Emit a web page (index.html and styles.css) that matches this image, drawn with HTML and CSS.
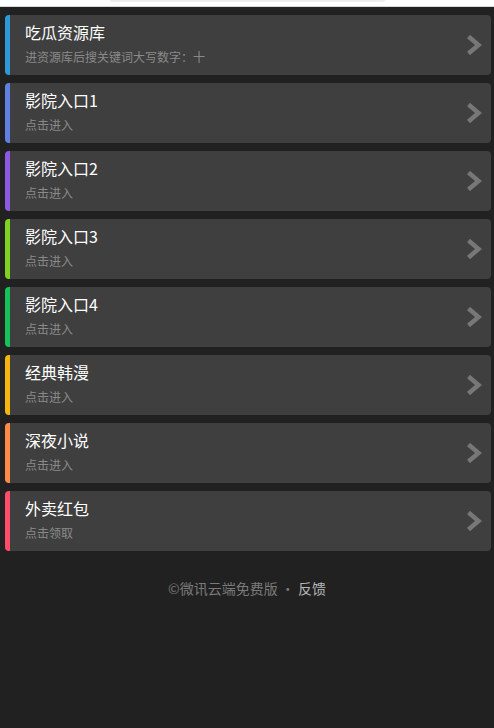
FILE: index.html
```html
<!DOCTYPE html>
<html lang="zh">
<head>
<meta charset="utf-8">
<link rel="stylesheet" href="styles.css">
</head>
<body>
<div class="topbar"><div class="topbar-pill"></div></div>
<div class="list">
  <a class="card c1"><div class="txt"><div class="title">吃瓜资源库</div><div class="sub">进资源库后搜关键词大写数字：十</div></div><svg class="chev" viewBox="0 0 16 20"><path d="M2.5 1.5 L12.5 10 L2.5 18.5" fill="none" stroke="#777777" stroke-width="4.5"/></svg></a>
  <a class="card c2"><div class="txt"><div class="title">影院入口1</div><div class="sub">点击进入</div></div><svg class="chev" viewBox="0 0 16 20"><path d="M2.5 1.5 L12.5 10 L2.5 18.5" fill="none" stroke="#777777" stroke-width="4.5"/></svg></a>
  <a class="card c3"><div class="txt"><div class="title">影院入口2</div><div class="sub">点击进入</div></div><svg class="chev" viewBox="0 0 16 20"><path d="M2.5 1.5 L12.5 10 L2.5 18.5" fill="none" stroke="#777777" stroke-width="4.5"/></svg></a>
  <a class="card c4"><div class="txt"><div class="title">影院入口3</div><div class="sub">点击进入</div></div><svg class="chev" viewBox="0 0 16 20"><path d="M2.5 1.5 L12.5 10 L2.5 18.5" fill="none" stroke="#777777" stroke-width="4.5"/></svg></a>
  <a class="card c5"><div class="txt"><div class="title">影院入口4</div><div class="sub">点击进入</div></div><svg class="chev" viewBox="0 0 16 20"><path d="M2.5 1.5 L12.5 10 L2.5 18.5" fill="none" stroke="#777777" stroke-width="4.5"/></svg></a>
  <a class="card c6"><div class="txt"><div class="title">经典韩漫</div><div class="sub">点击进入</div></div><svg class="chev" viewBox="0 0 16 20"><path d="M2.5 1.5 L12.5 10 L2.5 18.5" fill="none" stroke="#777777" stroke-width="4.5"/></svg></a>
  <a class="card c7"><div class="txt"><div class="title">深夜小说</div><div class="sub">点击进入</div></div><svg class="chev" viewBox="0 0 16 20"><path d="M2.5 1.5 L12.5 10 L2.5 18.5" fill="none" stroke="#777777" stroke-width="4.5"/></svg></a>
  <a class="card c8"><div class="txt"><div class="title">外卖红包</div><div class="sub">点击领取</div></div><svg class="chev" viewBox="0 0 16 20"><path d="M2.5 1.5 L12.5 10 L2.5 18.5" fill="none" stroke="#777777" stroke-width="4.5"/></svg></a>
</div>
<div class="footer">©微讯云端免费版 · <span class="fb">反馈</span></div>
</body>
</html>
```
FILE: styles.css
```css
html, body {
  margin: 0;
  padding: 0;
  background: #212121;
  font-family: "Noto Sans CJK SC", "Liberation Sans", sans-serif;
  height: 100%;
}
.topbar {
  height: 6px;
  background: #ffffff;
  border-bottom: 1px solid #d8d8d8;
}
.topbar-pill {
  margin-left: 110px;
  width: 275px;
  height: 2px;
  background: #eeeeee;
  border-radius: 0 0 6px 6px;
}
.list {
  display: flex;
  flex-direction: column;
  gap: 8px;
  padding: 8px 3px 0 5px;
}
.card {
  display: flex;
  align-items: center;
  height: 60px;
  background: #3f3f3f;
  border-radius: 4px;
  border-left: 5px solid #2f98d6;
  padding-left: 15px;
  padding-right: 9px;
  box-sizing: border-box;
}
.txt {
  flex: 1;
  display: flex;
  flex-direction: column;
}
.title {
  color: #ffffff;
  font-size: 16px;
  line-height: 22px;
  margin-top: -5px;
}
.sub {
  color: #8a8a8a;
  font-size: 12px;
  line-height: 16px;
  margin-top: 6px;
}
.chev {
  width: 16px;
  height: 20px;
}
.c1 { border-left-color: #2f98d6; }
.c2 { border-left-color: #5f80e0; }
.c3 { border-left-color: #8c5ae0; }
.c4 { border-left-color: #7ed321; }
.c5 { border-left-color: #15c25a; }
.c6 { border-left-color: #f6b40e; }
.c7 { border-left-color: #ff8a48; }
.c8 { border-left-color: #ff4c6a; }
.footer {
  text-align: center;
  color: #7a7a7a;
  font-size: 14px;
  margin-top: 27px;
  line-height: 20px;
}
.fb { color: #b8b8b8; }
```
